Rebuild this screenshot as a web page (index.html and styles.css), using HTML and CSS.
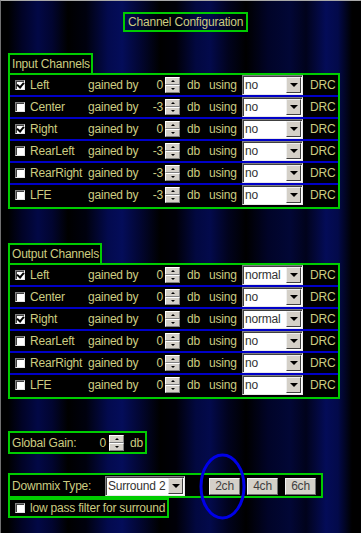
FILE: index.html
```html
<!DOCTYPE html>
<html lang="en">
<head>
    <meta charset="UTF-8">
    <meta name="viewport" content="width=device-width, initial-scale=1.0">
    <title>Channel Configuration</title>
    <link rel="stylesheet" href="styles.css">
</head>
<body>
    <div class="page">
        <div class="title">Channel Configuration</div>

        <!-- input side -->
        <div class="group">
            <div class="label">Input Channels</div>
            <div class="channels">
                <div class="row">
                    <span class="name"><span class="check on"></span>Left</span>
                    <span class="gain"><span>gained by</span><span>0</span></span>
                    <span class="spin"><i class="up"></i><i class="down"></i></span>
                    <span class="db">db</span>
                    <span class="using">using</span>
                    <span class="select"><span class="value">no</span><i class="arrow"></i></span>
                    <span class="drc">DRC</span>
                </div>
                <div class="row">
                    <span class="name"><span class="check"></span>Center</span>
                    <span class="gain"><span>gained by</span><span>-3</span></span>
                    <span class="spin"><i class="up"></i><i class="down"></i></span>
                    <span class="db">db</span>
                    <span class="using">using</span>
                    <span class="select"><span class="value">no</span><i class="arrow"></i></span>
                    <span class="drc">DRC</span>
                </div>
                <div class="row">
                    <span class="name"><span class="check on"></span>Right</span>
                    <span class="gain"><span>gained by</span><span>0</span></span>
                    <span class="spin"><i class="up"></i><i class="down"></i></span>
                    <span class="db">db</span>
                    <span class="using">using</span>
                    <span class="select"><span class="value">no</span><i class="arrow"></i></span>
                    <span class="drc">DRC</span>
                </div>
                <div class="row">
                    <span class="name"><span class="check"></span>RearLeft</span>
                    <span class="gain"><span>gained by</span><span>-3</span></span>
                    <span class="spin"><i class="up"></i><i class="down"></i></span>
                    <span class="db">db</span>
                    <span class="using">using</span>
                    <span class="select"><span class="value">no</span><i class="arrow"></i></span>
                    <span class="drc">DRC</span>
                </div>
                <div class="row">
                    <span class="name"><span class="check"></span>RearRight</span>
                    <span class="gain"><span>gained by</span><span>-3</span></span>
                    <span class="spin"><i class="up"></i><i class="down"></i></span>
                    <span class="db">db</span>
                    <span class="using">using</span>
                    <span class="select"><span class="value">no</span><i class="arrow"></i></span>
                    <span class="drc">DRC</span>
                </div>
                <div class="row">
                    <span class="name"><span class="check"></span>LFE</span>
                    <span class="gain"><span>gained by</span><span>-3</span></span>
                    <span class="spin"><i class="up"></i><i class="down"></i></span>
                    <span class="db">db</span>
                    <span class="using">using</span>
                    <span class="select"><span class="value">no</span><i class="arrow"></i></span>
                    <span class="drc">DRC</span>
                </div>
            </div>
        </div>

        <!-- output side -->
        <div class="group output">
            <div class="label">Output Channels</div>
            <div class="channels">
                <div class="row">
                    <span class="name"><span class="check on"></span>Left</span>
                    <span class="gain"><span>gained by</span><span>0</span></span>
                    <span class="spin"><i class="up"></i><i class="down"></i></span>
                    <span class="db">db</span>
                    <span class="using">using</span>
                    <span class="select"><span class="value">normal</span><i class="arrow"></i></span>
                    <span class="drc">DRC</span>
                </div>
                <div class="row">
                    <span class="name"><span class="check"></span>Center</span>
                    <span class="gain"><span>gained by</span><span>0</span></span>
                    <span class="spin"><i class="up"></i><i class="down"></i></span>
                    <span class="db">db</span>
                    <span class="using">using</span>
                    <span class="select"><span class="value">no</span><i class="arrow"></i></span>
                    <span class="drc">DRC</span>
                </div>
                <div class="row">
                    <span class="name"><span class="check on"></span>Right</span>
                    <span class="gain"><span>gained by</span><span>0</span></span>
                    <span class="spin"><i class="up"></i><i class="down"></i></span>
                    <span class="db">db</span>
                    <span class="using">using</span>
                    <span class="select"><span class="value">normal</span><i class="arrow"></i></span>
                    <span class="drc">DRC</span>
                </div>
                <div class="row">
                    <span class="name"><span class="check"></span>RearLeft</span>
                    <span class="gain"><span>gained by</span><span>0</span></span>
                    <span class="spin"><i class="up"></i><i class="down"></i></span>
                    <span class="db">db</span>
                    <span class="using">using</span>
                    <span class="select"><span class="value">no</span><i class="arrow"></i></span>
                    <span class="drc">DRC</span>
                </div>
                <div class="row">
                    <span class="name"><span class="check"></span>RearRight</span>
                    <span class="gain"><span>gained by</span><span>0</span></span>
                    <span class="spin"><i class="up"></i><i class="down"></i></span>
                    <span class="db">db</span>
                    <span class="using">using</span>
                    <span class="select"><span class="value">no</span><i class="arrow"></i></span>
                    <span class="drc">DRC</span>
                </div>
                <div class="row">
                    <span class="name"><span class="check"></span>LFE</span>
                    <span class="gain"><span>gained by</span><span>0</span></span>
                    <span class="spin"><i class="up"></i><i class="down"></i></span>
                    <span class="db">db</span>
                    <span class="using">using</span>
                    <span class="select"><span class="value">no</span><i class="arrow"></i></span>
                    <span class="drc">DRC</span>
                </div>
            </div>
        </div>

        <div class="global">
            <span class="gain wide"><span>Global Gain:</span><span>0</span></span>
            <span class="spin"><i class="up"></i><i class="down"></i></span>
            <span class="db">db</span>
        </div>

        <div class="downmix">
            <span class="mix-label">Downmix Type:</span>
            <span class="select mix-select"><span class="value">Surround 2</span><i class="arrow"></i></span>
            <span class="btn first">2ch</span>
            <span class="btn">4ch</span>
            <span class="btn">6ch</span>
        </div>
        <div class="lowpass">
            <span class="check"></span>low pass filter for surround
        </div>
    </div>

    <!-- the hand drawn mark around the 2ch button -->
    <svg class="mark" width="47" height="67" viewBox="0 0 47 67">
        <ellipse cx="23.5" cy="33.5" rx="21.5" ry="31.5" fill="none" stroke="#0000e8" stroke-width="3"/>
    </svg>
</body>
</html>
```

FILE: styles.css
```css
* {
    box-sizing: border-box;
}

body {
    margin: 0;
    height: 533px;
    overflow: hidden;
    position: relative;
    border-top: 1px solid #a8a8a8;
    border-left: 1px solid #707070;
    font: 12px/16px "Liberation Sans", Arial, sans-serif;
    letter-spacing: -0.2px;
    color: #cccc80;
    background: linear-gradient(90deg,
        #000 0px, #000 8px, #010326 22px, #020846 38px, #010530 52px,
        #000 68px, #00010e 86px, #030a4e 108px, #040d5a 122px, #020632 140px,
        #000 160px, #000008 176px, #020840 196px, #030a4c 210px, #01031e 228px,
        #000 246px, #010428 268px, #020736 290px, #01031c 306px, #040c58 326px,
        #030a4a 338px, #000 352px, #000 361px);
}

.page {
    display: flex;
    flex-direction: column;
    align-items: flex-start;
    padding: 11px 0 0 7px;
}

.title {
    margin-left: 115px;
    border: 2px solid #00cc00;
    padding: 0 3px;
}

/* channel groups */
.group {
    margin-top: 21px;
}

.group.output {
    margin-top: 34px;
}

.label {
    display: inline-block;
    vertical-align: top;
    border: 2px solid #00cc00;
    border-bottom: 0;
    background: #000;
    padding: 0 1px 0 2px;
    line-height: 18px;
}

.channels {
    width: 332px;
    border: 2px solid #00cc00;
    background: #000;
    padding-bottom: 2px;
}

.row {
    display: flex;
    align-items: center;
    height: 20px;
    padding-left: 5px;
}

.row + .row {
    height: 22px;
    border-top: 2px solid #0000c8;
}

.name {
    display: flex;
    align-items: center;
    width: 73px;
    white-space: nowrap;
}

.check {
    width: 10px;
    height: 10px;
    margin-right: 5px;
    flex: none;
    background: #fff;
    border: 1px solid;
    border-color: #808080 #e4e4e4 #e4e4e4 #808080;
    box-shadow: inset 1px 1px #404040;
    position: relative;
}

/* tick drawn with two borders */
.check.on::after {
    content: '';
    position: absolute;
    left: 2px;
    top: 0px;
    width: 3px;
    height: 5px;
    border: solid #000;
    border-width: 0 2px 2px 0;
    transform: rotate(40deg);
}

.gain {
    display: flex;
    justify-content: space-between;
    width: 75px;
}

.gain.wide {
    width: 94px;
}

/* up / down spinner */
.spin {
    display: flex;
    flex-direction: column;
    width: 15px;
    height: 16px;
    margin-left: 2px;
    flex: none;
}

.spin i {
    flex: 1;
    display: flex;
    align-items: center;
    justify-content: center;
    background: #d4d0c8;
    border: 1px solid;
    border-color: #fff #808080 #808080 #fff;
}

.spin i::after {
    content: '';
    border-left: 2px solid transparent;
    border-right: 2px solid transparent;
}

.spin .up::after {
    border-bottom: 2px solid #000;
}

.spin .down::after {
    border-top: 2px solid #000;
}

.db {
    width: 22px;
    margin-left: 7px;
}

.using {
    width: 33px;
}

.select {
    display: flex;
    align-items: center;
    width: 61px;
    height: 20px;
    flex: none;
    background: #fff;
    color: #333;
    border: 1px solid;
    border-color: #808080 #e8e8e8 #e8e8e8 #808080;
    box-shadow: inset 1px 1px #404040;
    padding: 1px 1px 1px 2px;
}

.value {
    flex: 1;
    overflow: hidden;
    white-space: nowrap;
}

.arrow {
    width: 15px;
    height: 16px;
    flex: none;
    display: flex;
    align-items: center;
    justify-content: center;
    background: #d4d0c8;
    border: 1px solid;
    border-color: #f0f0f0 #404040 #404040 #f0f0f0;
}

.arrow::after {
    content: '';
    border-left: 4px solid transparent;
    border-right: 4px solid transparent;
    border-top: 4px solid #000;
}

.drc {
    margin-left: 7px;
}

/* bottom controls */
.global {
    margin-top: 32px;
    display: flex;
    align-items: center;
    height: 23px;
    border: 2px solid #00cc00;
    background: #000;
    padding: 0 2px;
}

.global .spin {
    margin-left: 3px;
}

.global .db {
    width: auto;
    margin-left: 6px;
}

.downmix {
    margin-top: 19px;
    display: flex;
    align-items: center;
    height: 25px;
    border: 2px solid #00cc00;
    background: #000;
    padding: 1px 5px 0 2px;
}

.mix-label {
    width: 93px;
}

.mix-select {
    width: 80px;
}

.btn {
    width: 31px;
    height: 17px;
    margin-left: 7px;
    text-align: center;
    line-height: 15px;
    color: #404040;
    background: #d4d0c8;
    border: 1px solid;
    border-color: #f4f4f4 #707070 #707070 #f4f4f4;
}

.btn.first {
    margin-left: 24px;
}

.lowpass {
    display: flex;
    align-items: center;
    height: 20px;
    border: 2px solid #00cc00;
    background: #000;
    padding: 0 2px 0 5px;
}

.mark {
    position: absolute;
    left: 198px;
    top: 452px;
}
```
